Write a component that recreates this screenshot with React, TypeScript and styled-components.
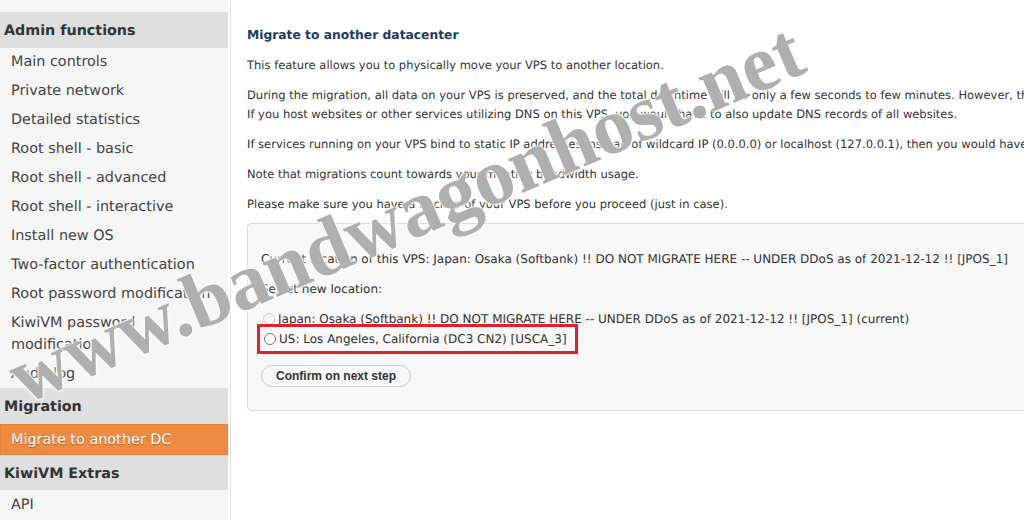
import styled, { createGlobalStyle } from 'styled-components';

const GlobalStyle = createGlobalStyle`
  html, body {
    margin: 0;
    padding: 0;
    background: #fff;
    overflow: hidden;
  }
  body {
    font-family: "DejaVu Sans", Verdana, sans-serif;
    color: #333;
    text-rendering: geometricPrecision;
  }
`;

const Page = styled.div`
  position: relative;
  display: flex;
  width: 1024px;
  height: 520px;
  overflow: hidden;
`;

const Sidebar = styled.aside`
  width: 228px;
  flex-shrink: 0;
  margin-right: 2px;
  background: #f6f6f6;
  display: flex;
  flex-direction: column;
`;

const TopGap = styled.div`
  height: 12px;
  background: #f6f6f6;
`;

const SectionTitle = styled.div`
  background: #dfdfdf;
  color: #333;
  font-weight: bold;
  font-size: 14.3px;
  line-height: 21px;
  padding: 9px 4px 5.5px;
  white-space: nowrap;
`;

const NavItem = styled.div<{ $active?: boolean }>`
  background: ${(p) => (p.$active ? '#ef8a42' : '#f6f6f6')};
  color: ${(p) => (p.$active ? '#fff' : '#444')};
  text-shadow: ${(p) => (p.$active ? '0 1px 1px rgba(0,0,0,0.3)' : 'none')};
  border: ${(p) => (p.$active ? '1px solid #e98236' : 'none')};
  font-size: 14.4px;
  line-height: 22px;
  padding: ${(p) => (p.$active ? '3.7px 10px 3.3px' : '3.7px 11px 3.3px')};
  overflow: hidden;
`;

const Main = styled.main`
  flex: 1;
  min-width: 0;
  border-left: 1px solid #e3e3e3;
  padding: 25px 0 0 16px;
  font-size: 11.5px;
  line-height: 19px;
  white-space: nowrap;
`;

const Heading = styled.h2`
  margin: 0 0 11px;
  font-size: 12.3px;
  line-height: 20px;
  color: #1e3d63;
  font-weight: bold;
`;

const Para = styled.p`
  margin: 0 0 11px;
`;

const Panel = styled.div`
  margin-top: -2px;
  width: 900px;
  border: 1px solid #dcdcdc;
  border-radius: 4px;
  background: #f8f8f8;
  padding: 26px 13px 22px;
  font-size: 12px;
`;

const OptionList = styled.div`
  display: flex;
  flex-direction: column;
  margin: -1px 0 16px;
`;

const Option = styled.label<{ $marked?: boolean }>`
  display: flex;
  align-items: center;
  align-self: flex-start;
  height: 20px;
  margin-left: ${(p) => (p.$marked ? '1px' : '0')};
  padding-right: ${(p) => (p.$marked ? '6px' : '0')};
  outline: ${(p) => (p.$marked ? '3px solid #e8202b' : 'none')};
  outline-offset: ${(p) => (p.$marked ? '2px' : '0')};
  color: #333;
`;

const Radio = styled.input`
  margin: 0 3px 0 2px;
  width: 12px;
  height: 12px;
`;

const Button = styled.button`
  font-family: "Liberation Sans", Arial, sans-serif;
  font-weight: bold;
  font-size: 12px;
  color: #333;
  background: #f7f7f7;
  border: 1px solid #cfcfcf;
  border-radius: 11px;
  height: 22px;
  padding: 0 14px;
  margin-bottom: 1px;
`;

const Watermark = styled.div`
  position: absolute;
  left: 406px;
  top: 214px;
  transform: translate(-50%, -50%) rotate(-23deg);
  font-family: "Liberation Serif", "Times New Roman", serif;
  font-weight: bold;
  font-size: 80px;
  line-height: 1;
  color: #afafaf;
  text-shadow: 0 0 2px #fff, 0 0 3px #fff, 0 0 4px #fff;
  white-space: nowrap;
  pointer-events: none;
`;

const adminItems = [
  'Main controls',
  'Private network',
  'Detailed statistics',
  'Root shell - basic',
  'Root shell - advanced',
  'Root shell - interactive',
  'Install new OS',
  'Two-factor authentication',
  'Root password modification',
];

export default function App() {
  return (
    <>
      <GlobalStyle />
      <Page>
        <Sidebar>
          <TopGap />
          <SectionTitle>Admin functions</SectionTitle>
          {adminItems.map((item) => (
            <NavItem key={item} style={{ whiteSpace: 'nowrap' }}>{item}</NavItem>
          ))}
          <NavItem>
            KiwiVM password
            <br />
            modification
          </NavItem>
          <NavItem>Audit log</NavItem>
          <SectionTitle>Migration</SectionTitle>
          <NavItem $active>Migrate to another DC</NavItem>
          <SectionTitle>KiwiVM Extras</SectionTitle>
          <NavItem>API</NavItem>
        </Sidebar>
        <Main>
          <Heading>Migrate to another datacenter</Heading>
          <Para>This feature allows you to physically move your VPS to another location.</Para>
          <Para>
            During the migration, all data on your VPS is preserved, and the total downtime will be only a few seconds to few minutes. However, the IP address of your VPS will change.
            <br />
            If you host websites or other services utilizing DNS on this VPS, you would have to also update DNS records of all websites.
          </Para>
          <Para>
            If services running on your VPS bind to static IP addresses instead of wildcard IP (0.0.0.0) or localhost (127.0.0.1), then you would have to update their configuration.
          </Para>
          <Para>Note that migrations count towards your monthly bandwidth usage.</Para>
          <Para>Please make sure you have a backup of your VPS before you proceed (just in case).</Para>
          <Panel>
            <Para>
              Current location of this VPS: Japan: Osaka (Softbank) !! DO NOT MIGRATE HERE -- UNDER DDoS as of 2021-12-12 !! [JPOS_1]
            </Para>
            <Para>Select new location:</Para>
            <OptionList>
              <Option>
                <Radio type="radio" name="loc" disabled />
                Japan: Osaka (Softbank) !! DO NOT MIGRATE HERE -- UNDER DDoS as of 2021-12-12 !! [JPOS_1] (current)
              </Option>
              <Option $marked>
                <Radio type="radio" name="loc" />
                US: Los Angeles, California (DC3 CN2) [USCA_3]
              </Option>
            </OptionList>
            <Button>Confirm on next step</Button>
          </Panel>
        </Main>
        <Watermark>www.bandwagonhost.net</Watermark>
      </Page>
    </>
  );
}
